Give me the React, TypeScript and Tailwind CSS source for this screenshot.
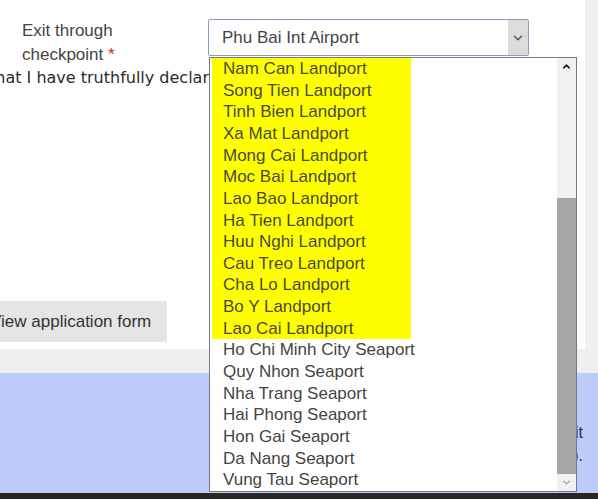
import { ChevronDown, ChevronUp } from 'lucide-react';

const landports = [
  'Nam Can Landport',
  'Song Tien Landport',
  'Tinh Bien Landport',
  'Xa Mat Landport',
  'Mong Cai Landport',
  'Moc Bai Landport',
  'Lao Bao Landport',
  'Ha Tien Landport',
  'Huu Nghi Landport',
  'Cau Treo Landport',
  'Cha Lo Landport',
  'Bo Y Landport',
  'Lao Cai Landport',
];

const seaports = [
  'Ho Chi Minh City Seaport',
  'Quy Nhon Seaport',
  'Nha Trang Seaport',
  'Hai Phong Seaport',
  'Hon Gai Seaport',
  'Da Nang Seaport',
  'Vung Tau Seaport',
];

export default function App() {
  return (
    <div className="relative w-[598px] h-[499px] overflow-hidden bg-white font-['Liberation_Sans',Arial,sans-serif]">
      {/* form area */}
      <div className="flex h-[349px]">
        <div className="w-[585px] overflow-hidden pt-[19px]">
          <div className="flex">
            <div className="w-[186px] ml-[22px] text-[17px] leading-[24px] text-[#444]">
              Exit through
              <br />
              checkpoint <span className="text-[#c9302c]">*</span>
            </div>
            <div className="w-[321px] h-[37px] flex items-center border border-[#8a9dbb] rounded-[2px] bg-white">
              <span className="flex-1 pl-[13px] text-[17px] text-[#444]">Phu Bai Int Airport</span>
              <span className="w-[20px] h-full flex items-center justify-center bg-[#dcdcdc]">
                <ChevronDown className="w-[14px] h-[14px] text-[#555]" strokeWidth={2.5} />
              </span>
            </div>
          </div>
          <p className="-ml-[11px] whitespace-nowrap font-['DejaVu_Sans',Verdana,sans-serif] text-[16px] leading-[22px] text-[#2b2b2b]">
            that I have truthfully declared the above information
          </p>
          <button className="mt-[212px] -ml-[26px] h-[41px] px-4 bg-[#e5e5e5] text-[17px] text-[#333]">
            View application form
          </button>
        </div>
        <div className="flex-1 bg-[#f0f0f0]" />
      </div>
      <div className="h-[24px] bg-[#efefef]" />
      <div className="h-[120px] bg-[#bfcbfb] pt-[48px] pr-[15px] text-right text-[16px] leading-[23px] text-[#1c2a5a]">
        Please check before you submit
        <br />
        (entry date(s)).
      </div>
      <div className="h-[6px] bg-[#2a2621]" />

      {/* open dropdown list */}
      <div className="absolute left-[209px] top-[57px] w-[368px] h-[435px] flex border border-[#6f7a87] bg-white">
        <div className="flex-1 pl-[2px] overflow-hidden">
          {landports.map(p => (
            <div key={p} className="w-[199px] h-[21.65px] flex items-center pl-[11px] bg-[#ffff00] text-[17px] text-[#4a4a3a] whitespace-nowrap">
              {p}
            </div>
          ))}
          {seaports.map(p => (
            <div key={p} className="h-[21.65px] flex items-center pl-[11px] text-[17px] text-[#444] whitespace-nowrap">
              {p}
            </div>
          ))}
        </div>
        <div className="w-[19px] flex flex-col bg-[#f1f1f1]">
          <div className="h-[17px] flex items-center justify-center">
            <ChevronUp className="w-[11px] h-[11px] text-[#222]" strokeWidth={3.5} />
          </div>
          <div className="h-[123px]" />
          <div className="flex-1 bg-[#a6a6a6]" />
          <div className="h-[17px] flex items-center justify-center">
            <ChevronDown className="w-[11px] h-[11px] text-[#a3a3a3]" strokeWidth={3} />
          </div>
        </div>
      </div>
    </div>
  );
}
